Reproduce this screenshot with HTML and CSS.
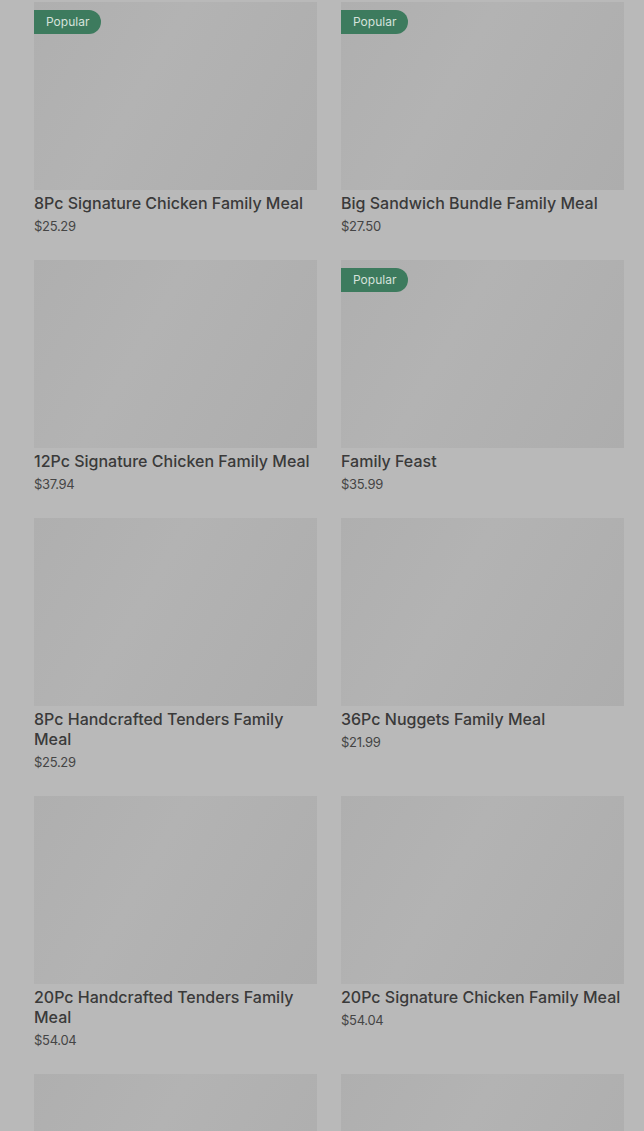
FILE: index.html
```html
<!DOCTYPE html>
<html>
<head>
<meta charset="utf-8">
<link rel="stylesheet" href="styles.css">
</head>
<body>
<main class="grid">
  <div class="card">
    <div class="img"><span class="badge">Popular</span></div>
    <div class="title">8Pc Signature Chicken Family Meal</div>
    <div class="price">$25.29</div>
  </div>
  <div class="card">
    <div class="img"><span class="badge">Popular</span></div>
    <div class="title">Big Sandwich Bundle Family Meal</div>
    <div class="price">$27.50</div>
  </div>
  <div class="card">
    <div class="img"></div>
    <div class="title">12Pc Signature Chicken Family Meal</div>
    <div class="price">$37.94</div>
  </div>
  <div class="card">
    <div class="img"><span class="badge">Popular</span></div>
    <div class="title">Family Feast</div>
    <div class="price">$35.99</div>
  </div>
  <div class="card">
    <div class="img"></div>
    <div class="title">8Pc Handcrafted Tenders Family Meal</div>
    <div class="price">$25.29</div>
  </div>
  <div class="card">
    <div class="img"></div>
    <div class="title">36Pc Nuggets Family Meal</div>
    <div class="price">$21.99</div>
  </div>
  <div class="card">
    <div class="img"></div>
    <div class="title">20Pc Handcrafted Tenders Family Meal</div>
    <div class="price">$54.04</div>
  </div>
  <div class="card">
    <div class="img"></div>
    <div class="title">20Pc Signature Chicken Family Meal</div>
    <div class="price">$54.04</div>
  </div>
  <div class="card">
    <div class="img"></div>
    <div class="title">&nbsp;</div>
    <div class="price">&nbsp;</div>
  </div>
  <div class="card">
    <div class="img"></div>
    <div class="title">&nbsp;</div>
    <div class="price">&nbsp;</div>
  </div>
</main>
</body>
</html>
```

FILE: styles.css
```css
html, body {
  margin: 0;
  padding: 0;
  background: #b9b9b9;
  overflow: hidden;
}
body {
  font-family: Inter, "Liberation Sans", sans-serif;
  color: #3a3a3a;
}
.grid {
  display: grid;
  grid-template-columns: 283px 283px;
  column-gap: 24px;
  padding: 2px 20px 0 34px;
}
.card {
  display: flex;
  flex-direction: column;
  padding-bottom: 24px;
}
.img {
  position: relative;
  height: 188px;
  background: linear-gradient(120deg, #afafaf 0%, #b3b3b3 40%, #adadad 100%);
}
.badge {
  position: absolute;
  left: 0;
  top: 8px;
  height: 24px;
  line-height: 24px;
  padding: 0 12px 0 12px;
  background: #3d7b5e;
  color: #d6e2dc;
  font-size: 12px;
  border-radius: 0 12px 12px 0;
}
.title {
  margin-top: 3px;
  font-size: 16px;
  font-weight: 500;
  line-height: 20px;
  color: #3a3a3a;
}
.price {
  margin-top: 3px;
  font-size: 13px;
  line-height: 20px;
  color: #454545;
  letter-spacing: -0.3px;
}
```
